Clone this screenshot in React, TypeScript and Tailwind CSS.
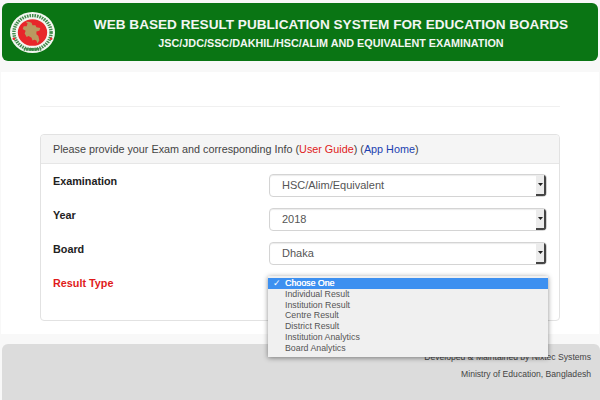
const font = "font-['Liberation_Sans',Arial,sans-serif]";

function Emblem() {
  return (
    <svg width="45" height="41" viewBox="0 0 46 46" preserveAspectRatio="none" className="shrink-0">
      <circle cx="23" cy="23" r="23" fill="#f4f6f1" />
      <circle cx="23" cy="23" r="19" fill="none" stroke="#3f8a4a" strokeWidth="3.5" strokeDasharray="1.6 1" />
      <circle cx="23" cy="23" r="15" fill="#e8262a" />
      <path d="M19 11l3 1 1 3 3 0 1 2 4 1-1 3-3 1 0 3 2 2 1 5-2 3-1-3-2-1-2 1-1-3-3-2-2 1-2-4 1-3-3-2 1-3 3 0 1-3-2-2z" fill="#b99a60" />
      <circle cx="4" cy="30" r="1.4" fill="#e8262a" />
      <circle cx="42" cy="30" r="1.4" fill="#e8262a" />
      <path d="M14 42h18" stroke="#3f8a4a" strokeWidth="3" strokeDasharray="1.6 0.8" />
    </svg>
  );
}

function Select({ value }: { value: string }) {
  return (
    <div className="flex h-[23px] w-[278px] items-center overflow-hidden rounded-[4px] border border-[#d4d4d4] bg-white shadow-[inset_0_1px_1px_rgba(0,0,0,0.08)]">
      <span className="flex-1 pl-[12px] text-[11px] text-[#555555]">{value}</span>
      <span className="flex h-full w-[10px] items-center justify-center border-r-2 border-b-2 border-[#444444] bg-[#ececec]">
        <svg width="5" height="3" viewBox="0 0 5 3"><path d="M0 0h5L2.5 3z" fill="#222222" /></svg>
      </span>
    </div>
  );
}

function Row({ label, value, red }: { label: string; value?: string; red?: boolean }) {
  return (
    <div className="flex h-[24px] items-start">
      <span className={`w-[216px] text-[10.8px] leading-[14px] font-bold ${red ? "text-[#e01b1b]" : "text-[#222222]"}`}>{label}</span>
      {value && <Select value={value} />}
    </div>
  );
}

const options = ["Individual Result", "Institution Result", "Centre Result", "District Result", "Institution Analytics", "Board Analytics"];

export default function App() {
  return (
    <div className={`${font} h-[400px] w-[600px] overflow-hidden bg-[#f8f8f8] pt-[3px]`}>
      <header className="mx-[2px] flex h-[58px] items-center rounded-[6px] bg-[#0a7514] pl-[8px]">
        <Emblem />
        <div className="flex-1 pl-[9px] text-center font-bold text-[#f2f6f2]">
          <div className="text-[13.6px] leading-[18px]">WEB BASED RESULT PUBLICATION SYSTEM FOR EDUCATION BOARDS</div>
          <div className="mt-[3px] text-[10.8px] leading-[12px]">JSC/JDC/SSC/DAKHIL/HSC/ALIM AND EQUIVALENT EXAMINATION</div>
        </div>
      </header>

      <main className="mx-[1px] mt-[11px] h-[262px] bg-white px-[39px] pt-[34px]">
        <hr className="border-t border-[#f0f0f0]" />
        <section className="relative mt-[27px] h-[187px] rounded-[4px] border border-[#e2e2e2]">
          <div className="flex h-[29px] items-center rounded-t-[4px] border-b border-[#e6e6e6] bg-[#f5f5f5] pl-[12px] text-[10.8px] text-[#444444]">
            <span>Please provide your Exam and corresponding Info (<span className="text-[#e01b1b]">User Guide</span>) (<span className="text-[#1a3fb0]">App Home</span>)</span>
          </div>
          <div className="flex flex-col gap-[10px] pt-[10px] pl-[12px]">
            <Row label="Examination" value="HSC/Alim/Equivalent" />
            <Row label="Year" value="2018" />
            <Row label="Board" value="Dhaka" />
            <Row label="Result Type" red />
          </div>
          <div className="absolute top-[141px] left-[227px] z-10 h-[81px] w-[280px] bg-[#f0f0f0] pt-[2px] text-[8.8px] leading-[10.7px] text-[#555555] shadow-[0_1px_5px_rgba(0,0,0,0.45)]">
            <div className="flex h-[11px] items-center bg-[#3d90f0] text-white">
              <span className="w-[17px] pl-[5px] text-[9px]">✓</span>
              <span className="[text-shadow:0.3px_0_0_#fff]">Choose One</span>
            </div>
            {options.map((o) => (
              <div key={o} className="pl-[17px]">{o}</div>
            ))}
          </div>
        </section>
      </main>

      <footer className="mt-[10px] ml-[2px] h-[60px] rounded-tl-[6px] rounded-tr-[6px] bg-[#dcdcdc] pt-[7px] pr-[9px] text-right text-[8.6px] leading-[12px] text-[#444444]">
        <div>Developed &amp; Maintained by Nixtec Systems</div>
        <div className="mt-[5px]">Ministry of Education, Bangladesh</div>
      </footer>
    </div>
  );
}
